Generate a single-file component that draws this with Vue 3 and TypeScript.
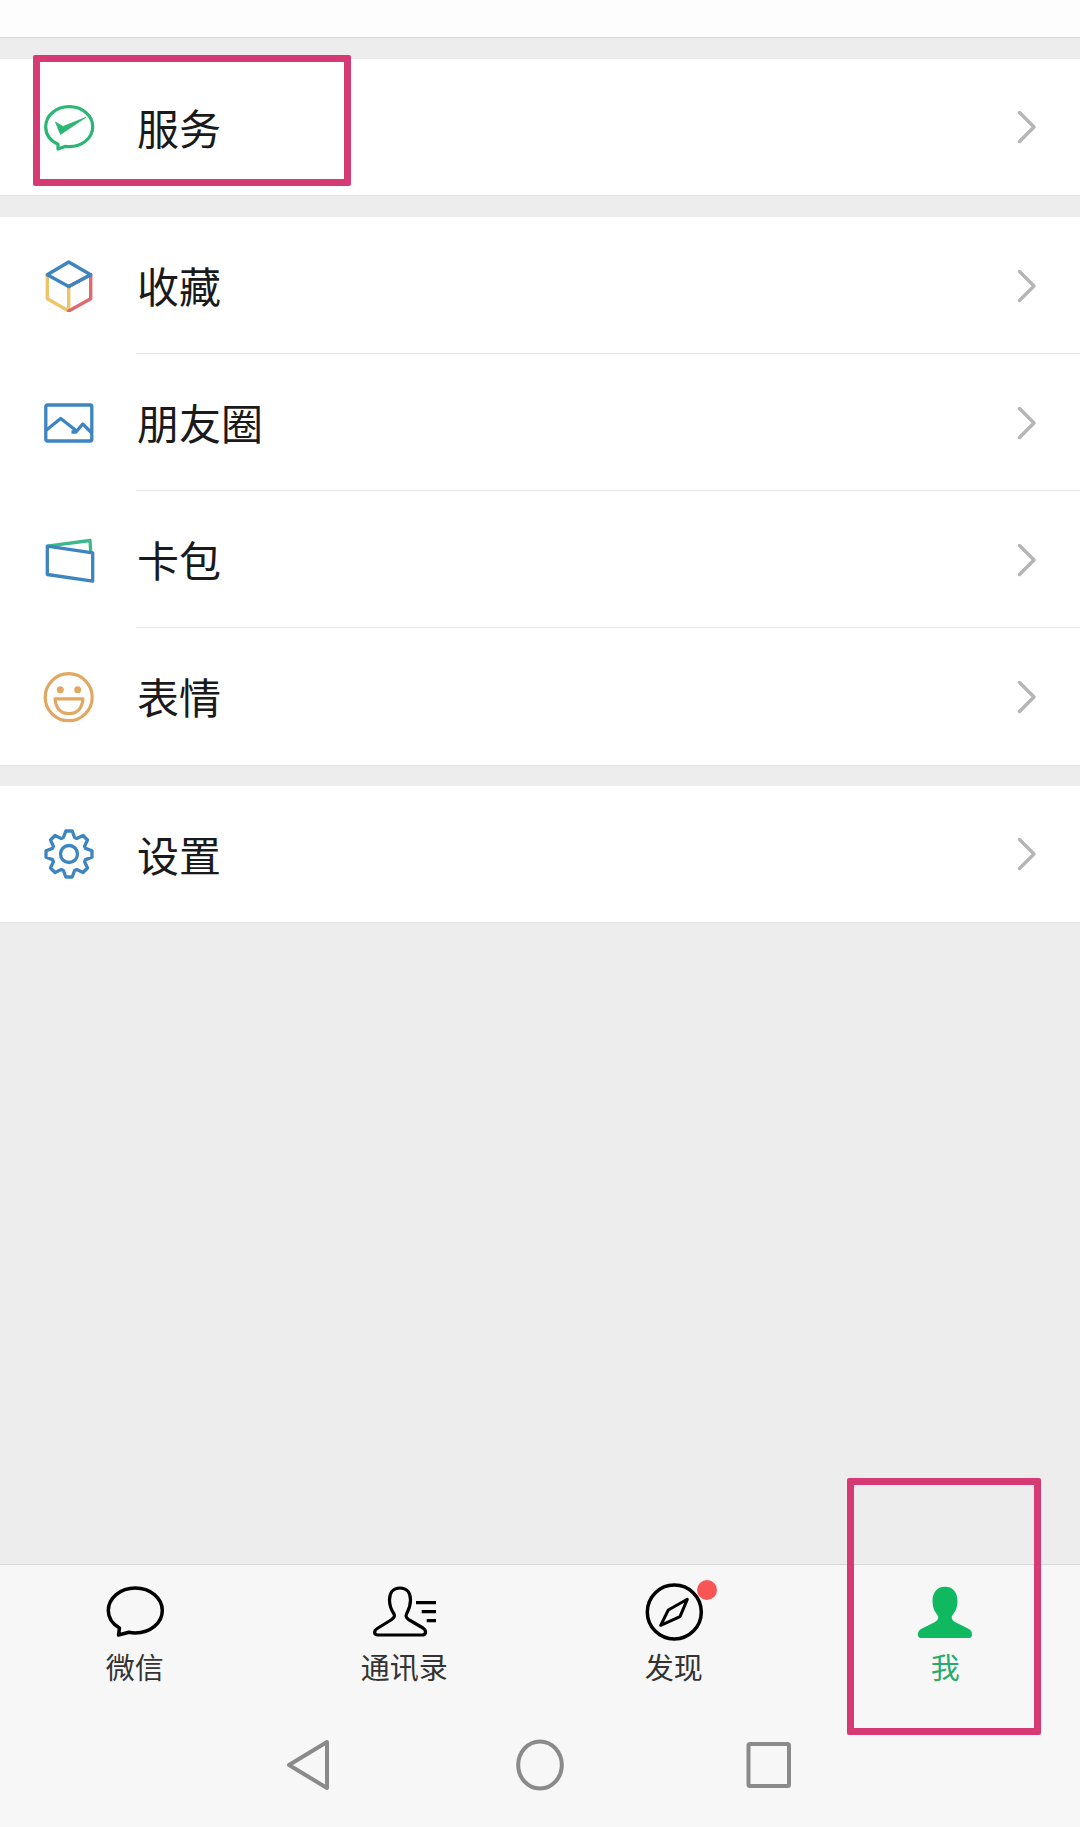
<script setup lang="ts">
function gear(): string {
  const cx = 26, cy = 26, teeth = 8, R = 23.2, r = 17.4
  const step = (Math.PI * 2) / teeth
  const pts: string[] = []
  for (let i = 0; i < teeth; i++) {
    const a = -Math.PI / 2 + i * step
    const offs: [number, number][] = [[-0.26, r], [-0.11, R], [0.11, R], [0.26, r]]
    for (const [o, rad] of offs) {
      const x = cx + rad * Math.cos(a + o * step * 1.6)
      const y = cy + rad * Math.sin(a + o * step * 1.6)
      pts.push(`${x.toFixed(2)} ${y.toFixed(2)}`)
    }
  }
  return 'M' + pts.join(' L') + ' Z'
}
const gearPath = gear()
</script>

<template>
  <div class="page">
    <div class="top"></div>

    <section class="group first">
      <div class="row">
        <svg class="icon" viewBox="0 0 52 52">
          <path d="M15 43.2 C7.5 39.8 2.7 33.3 2.7 25.7 C2.7 14.6 13.2 5.7 26.2 5.7 C39.2 5.7 49.7 14.6 49.7 25.7 C49.7 36.8 39.2 45.7 26.2 45.7 C24.8 45.7 23.5 45.6 22 45.4 L15 48 Z" fill="none" stroke="#2bb673" stroke-width="3.2" stroke-linejoin="round" />
          <path d="M12.5 21 L20 25.5 L43 16.3 L17.5 33.5 Z" fill="#2bb673" stroke="#2bb673" stroke-width="0.8" stroke-linejoin="round" />
        </svg>
        <span class="name">服务</span>
        <svg class="chev" viewBox="0 0 20 34"><path d="M2.5 2.5 L17 17 L2.5 31.5" /></svg>
      </div>
    </section>

    <section class="group">
      <div class="row line">
        <svg class="icon" viewBox="0 0 52 52" fill="none" stroke-width="3.4" stroke-linejoin="round" stroke-linecap="round">
          <path d="M4.3 14.8 L4.3 38.8 L25.7 51 L25.7 26.5" stroke="#eec566" />
          <path d="M25.7 26.5 L47.7 14.8 L47.7 38.8 L25.7 51" stroke="#dc6a6f" />
          <path d="M25.7 2 L47.7 14.8 L25.7 26.5 L4.3 14.8 Z" stroke="#3d85c0" />
        </svg>
        <span class="name">收藏</span>
        <svg class="chev" viewBox="0 0 20 34"><path d="M2.5 2.5 L17 17 L2.5 31.5" /></svg>
      </div>
      <div class="row line">
        <svg class="icon" viewBox="0 0 52 52" fill="none" stroke="#3d85c0" stroke-width="3.3" stroke-linejoin="round">
          <rect x="2.8" y="8" width="46" height="36" rx="1.5" />
          <path d="M2.8 33.5 L17.7 21.5 L33 33.5 M28.5 35 L33 35 L39.7 27 L48.8 36" />
        </svg>
        <span class="name">朋友圈</span>
        <svg class="chev" viewBox="0 0 20 34"><path d="M2.5 2.5 L17 17 L2.5 31.5" /></svg>
      </div>
      <div class="row line">
        <svg class="icon" viewBox="0 0 52 52" fill="none" stroke-width="3.3" stroke-linejoin="round">
          <path d="M4.3 12.2 L47 6.5 L47.7 18.2" stroke="#3cb98a" />
          <path d="M4.3 12.2 L49.7 18.8 L49.7 47.2 L4.3 40.5 Z" stroke="#3d85c0" />
        </svg>
        <span class="name">卡包</span>
        <svg class="chev" viewBox="0 0 20 34"><path d="M2.5 2.5 L17 17 L2.5 31.5" /></svg>
      </div>
      <div class="row">
        <svg class="icon" viewBox="0 0 52 52" fill="none" stroke="#e2a862" stroke-width="3.2" stroke-linejoin="round">
          <circle cx="25.7" cy="26.2" r="23.5" />
          <circle cx="17.3" cy="18.8" r="3.5" fill="#e2a862" stroke="none" />
          <circle cx="34.7" cy="18.8" r="3.5" fill="#e2a862" stroke="none" />
          <path d="M12 27.8 H40 Q38.5 42.5 26 42.5 Q13.5 42.5 12 27.8 Z" />
        </svg>
        <span class="name">表情</span>
        <svg class="chev" viewBox="0 0 20 34"><path d="M2.5 2.5 L17 17 L2.5 31.5" /></svg>
      </div>
    </section>

    <section class="group last">
      <div class="row">
        <svg class="icon" viewBox="0 0 52 52" fill="none" stroke="#3d85c0" stroke-width="3.3" stroke-linejoin="round">
          <path :d="gearPath" />
          <circle cx="26" cy="26" r="8.5" />
        </svg>
        <span class="name">设置</span>
        <svg class="chev" viewBox="0 0 20 34"><path d="M2.5 2.5 L17 17 L2.5 31.5" /></svg>
      </div>
    </section>

    <div class="fill"></div>

    <footer class="bar">
      <nav class="tabs">
        <div class="tab">
          <svg class="tab-icon" viewBox="0 0 60 58" fill="none" stroke="#000" stroke-width="3.5" stroke-linejoin="round">
            <path d="M14.5 45 C7.5 41 3.3 34.7 3.3 27.5 C3.3 15 15.3 5 30.3 5 C45.3 5 57.3 15 57.3 27.5 C57.3 40 45.3 50 30.3 50 C28 50 26 49.8 24 49.3 L13.5 52 Z" />
          </svg>
          <span class="label">微信</span>
        </div>
        <div class="tab">
          <svg class="tab-icon wide" viewBox="0 0 68 58" fill="none" stroke="#000" stroke-width="3.2" stroke-linejoin="round">
            <path d="M30 5 C23 5 19.5 10 19.5 17 C19.5 24 22 28 24 31 C25.5 33.5 24 35 21 37 L8 45 C3 48 4 52 8 52 H52 C56 52 57 48 53 45 L41 38 C37 36 35 33.5 36.5 31 C38 28 40.5 24 40.5 17 C40.5 10 37 5 30 5 Z" />
            <path d="M46 19.7 H66 M51.7 28.7 H66 M56.7 37.7 H66" />
          </svg>
          <span class="label">通讯录</span>
        </div>
        <div class="tab">
          <span class="dot-wrap">
            <svg class="tab-icon" viewBox="0 0 60 58" fill="none" stroke="#000" stroke-width="3.5" stroke-linejoin="round">
              <circle cx="30.3" cy="29" r="27" />
              <path d="M43.3 16.3 L36 33.7 L16.7 42.3 L24.3 27 Z" stroke-width="3" />
            </svg>
            <i class="dot"></i>
          </span>
          <span class="label">发现</span>
        </div>
        <div class="tab active">
          <svg class="tab-icon" viewBox="0 0 60 58">
            <path fill="#10b85f" d="M30 3.7 C21.5 3.7 17.5 10 17.5 18 C17.5 26 21 30 23 33 C24 36 22 38 19 39.5 L6 46 C2 48 1.7 55 6 55 H54 C58 55 58 48 54 46 L41 39.5 C38 38 36 36 37 33 C39 30 42.5 26 42.5 18 C42.5 10 38.5 3.7 30 3.7 Z" />
          </svg>
          <span class="label">我</span>
        </div>
      </nav>

      <div class="sysnav">
        <svg viewBox="0 0 56 58" fill="none" stroke="#8a8a8a" stroke-width="4" stroke-linejoin="round">
          <path d="M45 6 L7 29 L45 52 Z" />
        </svg>
        <svg viewBox="0 0 56 58" fill="none" stroke="#8a8a8a" stroke-width="4">
          <ellipse cx="28" cy="29" rx="21.8" ry="23.5" />
        </svg>
        <svg viewBox="0 0 56 58" fill="none" stroke="#8a8a8a" stroke-width="4" stroke-linejoin="round">
          <rect x="6.5" y="8" width="40.5" height="42" rx="1.5" />
        </svg>
      </div>
    </footer>

    <div class="mark mark-a"></div>
    <div class="mark mark-b"></div>
  </div>
</template>

<style scoped>
.page {
  position: relative;
  width: 1080px;
  height: 1827px;
  display: flex;
  flex-direction: column;
  background: #ededed;
  font-family: "Noto Sans CJK SC", "Noto Sans", sans-serif;
  overflow: hidden;
}
.top {
  height: 37px;
  background: #fdfdfd;
  border-bottom: 1px solid #d9d9d9;
  flex: none;
}
.group {
  flex: none;
  margin-top: 21px;
  background: #fff;
  border-bottom: 1px solid #e3e3e3;
}
.group.last {
  margin-top: 20px;
}
.row {
  position: relative;
  display: flex;
  align-items: center;
  height: 137px;
  padding: 0 43px;
  box-sizing: border-box;
}
.group.first .row,
.group.last .row {
  height: 136px;
}
.row.line::after {
  content: "";
  position: absolute;
  left: 136px;
  right: 0;
  bottom: 0;
  height: 1px;
  background: #e6e6e6;
}
.icon {
  width: 52px;
  height: 52px;
  flex: none;
}
.name {
  margin-left: 42px;
  flex: 1;
  font-size: 42px;
  line-height: 60px;
  color: #1a1a1a;
  padding-bottom: 1px;
}
.chev {
  width: 20px;
  height: 34px;
  flex: none;
  fill: none;
  stroke: #b5b5b5;
  stroke-width: 3.5;
  stroke-linecap: round;
  stroke-linejoin: round;
}
.fill {
  flex: 1;
}
.bar {
  flex: none;
  height: 263px;
  box-sizing: border-box;
  border-top: 1px solid #d8d8d8;
  background: #f7f7f7;
  display: flex;
  flex-direction: column;
}
.tabs {
  display: grid;
  grid-template-columns: repeat(4, 1fr);
  padding: 18px 2px 0 0;
}
.tab {
  display: flex;
  flex-direction: column;
  align-items: center;
}
.tab.active {
  padding-left: 4px;
}
.tab-icon {
  width: 60px;
  height: 58px;
  display: block;
}
.tab-icon.wide {
  width: 68px;
}
.dot-wrap {
  position: relative;
  display: block;
}
.dot {
  position: absolute;
  left: 53px;
  top: -3px;
  width: 20px;
  height: 20px;
  border-radius: 50%;
  background: #f95555;
}
.label {
  margin-top: 8px;
  font-size: 29px;
  line-height: 34px;
  color: #333;
}
.active .label {
  color: #29ab6b;
}
.sysnav {
  display: flex;
  justify-content: center;
  gap: 174px;
  margin-top: 53px;
}
.sysnav svg {
  width: 56px;
  height: 58px;
  flex: none;
}
.mark {
  position: absolute;
  box-sizing: border-box;
  border: 7px solid #d63a74;
  border-radius: 2px;
}
.mark-a {
  left: 33px;
  top: 55px;
  width: 318px;
  height: 131px;
}
.mark-b {
  left: 847px;
  top: 1478px;
  width: 194px;
  height: 257px;
}
</style>
